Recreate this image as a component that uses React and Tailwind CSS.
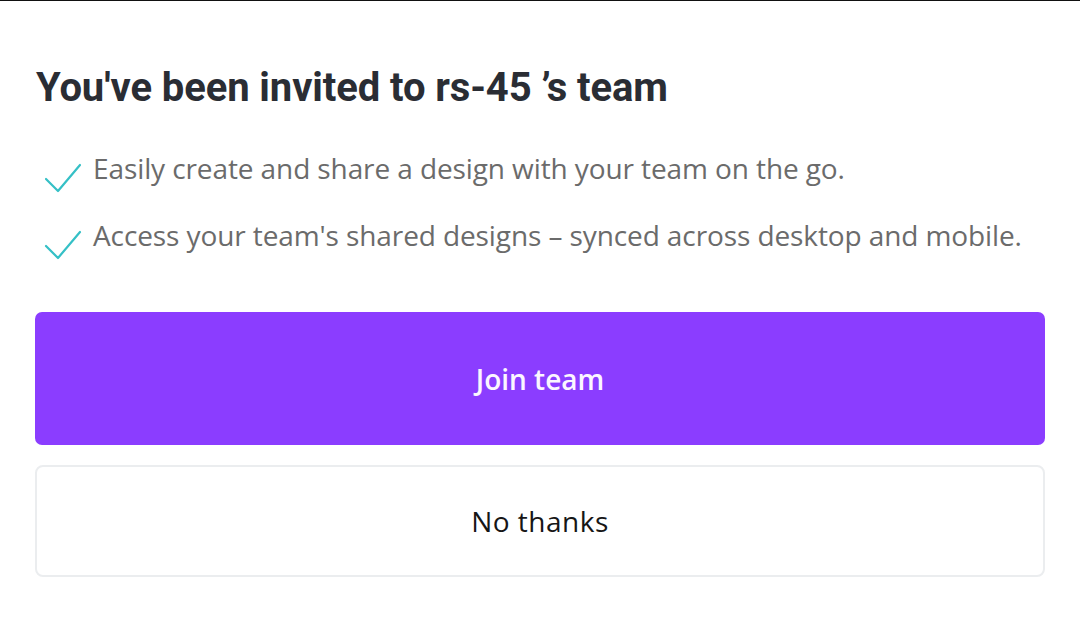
import React from "react";

const Check = () => (
  <svg width="38" height="30" viewBox="0 0 38 30" className="shrink-0">
    <path d="M2 16 L14 28 L36 2" fill="none" stroke="#35c0c6" strokeWidth="2.2" strokeLinecap="round" strokeLinejoin="round" />
  </svg>
);

const perks = [
  "Easily create and share a design with your team on the go.",
  "Access your team's shared designs – synced across desktop and mobile.",
];

const App = () => {
  return (
    <div className="w-[1080px] h-[631px] bg-white border-t border-[#111] overflow-hidden" style={{ fontFamily: "'Open Sans', sans-serif" }}>
      <div className="px-[35px]">
        <h1
          className="mt-[63px] ml-px text-[40px] leading-[48px] font-bold text-[#2a2d34] tracking-[-0.1px]"
          style={{ fontFamily: "Roboto, sans-serif" }}
        >
          You've been invited to rs-45 ’s team
        </h1>

        <ul className="mt-[38px] flex flex-col gap-[31px]">
          {perks.map((p) => (
            <li key={p} className="flex items-start h-[36px]">
              <div className="ml-[9px] mt-[13px] w-[49px] h-[30px]">
                <Check />
              </div>
              <span className="text-[28px] leading-[36px] text-[#6b6b6b] tracking-[-0.1px]">{p}</span>
            </li>
          ))}
        </ul>

        <button className="mt-[59px] w-full h-[133px] rounded-[7px] bg-[#8b3dff] text-[#fbf6ff] text-[28px] font-semibold">
          Join team
        </button>
        <button className="mt-[20px] w-full h-[112px] rounded-[8px] border-2 border-[#ebedef] bg-white text-[#161616] text-[28px] font-medium tracking-[0.5px]">
          No thanks
        </button>
      </div>
    </div>
  );
};

export default App;
